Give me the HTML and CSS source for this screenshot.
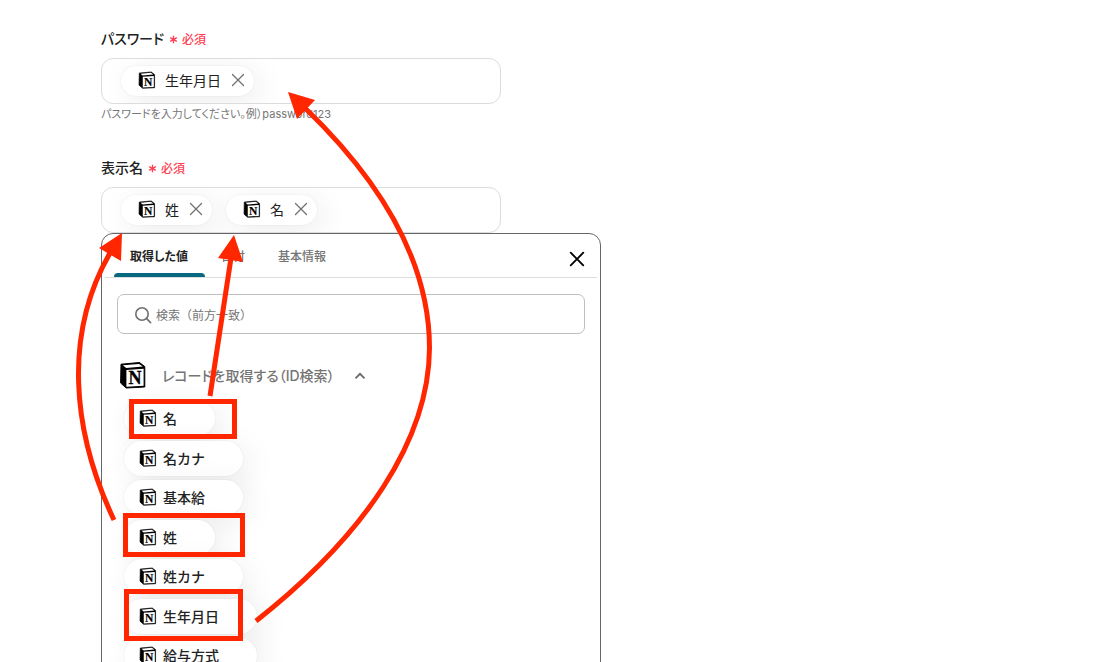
FILE: index.html
```html
<!DOCTYPE html>
<html lang="ja">
<head>
<meta charset="utf-8">
<meta name="viewport" content="width=device-width, initial-scale=1">
<title>フォーム設定</title>
<link rel="stylesheet" href="styles.css">
</head>
<body>
<svg class="defs" aria-hidden="true">
  <symbol id="notion" viewBox="0 0 28 28">
    <path d="M2 3.2 L20.5 1.5 L25.8 5.6 V26 L7.200 27 L1.6 22 Z" fill="#000" stroke="#000" stroke-width="1" stroke-linejoin="round"/>
    <path d="M3.800 4.2 L20 2.9 L23.8 5.6 L7.2 7 Z" fill="#fff"/>
    <path d="M7.4 9 L24.6 7.8 V24.800 L7.4 25.8 Z" fill="#fff"/>
    <text x="16" y="22.800" text-anchor="middle" class="logo-letter">N</text>
  </symbol>
  <symbol id="close" viewBox="0 0 14 14">
    <path d="M1.5 1.5 L12.5 12.5 M12.5 1.5 L1.5 12.5" fill="none" stroke="currentColor" stroke-linecap="round"/>
  </symbol>
</svg>
<main class="page">
  <form class="form">
    <div class="field">
      <label class="label" for="password">パスワード <span class="required"><svg class="star" viewBox="0 0 10 10" aria-hidden="true"><path d="M5 .8 V9.2 M1.3 2.9 L8.7 7.1 M8.7 2.9 L1.3 7.1"/></svg>必須</span></label>
      <div class="box">
        <span class="chip"><svg class="mark"><use href="#notion"/></svg>生年月日<button type="button" class="remove" aria-label="生年月日を削除"><svg><use href="#close"/></svg></button></span>
        <input class="entry" id="password" type="text">
      </div>
      <p class="help">パスワードを入力してください。例）password123</p>
    </div>
    <div class="field">
      <label class="label" for="display-name">表示名 <span class="required"><svg class="star" viewBox="0 0 10 10" aria-hidden="true"><path d="M5 .8 V9.2 M1.3 2.9 L8.7 7.1 M8.7 2.9 L1.3 7.1"/></svg>必須</span></label>
      <div class="box">
        <span class="chip"><svg class="mark"><use href="#notion"/></svg>姓<button type="button" class="remove" aria-label="姓を削除"><svg><use href="#close"/></svg></button></span>
        <span class="chip"><svg class="mark"><use href="#notion"/></svg>名<button type="button" class="remove" aria-label="名を削除"><svg><use href="#close"/></svg></button></span>
        <input class="entry" id="display-name" type="text">
      </div>
    </div>
  </form>
  <section class="panel">
    <header class="tabs">
      <button type="button" class="tab active">取得した値</button>
      <button type="button" class="tab">日付</button>
      <button type="button" class="tab">基本情報</button>
      <button type="button" class="dismiss" aria-label="閉じる"><svg><use href="#close"/></svg></button>
    </header>
    <div class="content">
      <div class="search">
        <svg class="lens" viewBox="0 0 18 18" aria-hidden="true"><circle cx="8" cy="8" r="6.2"/><path d="M12.6 12.6 L16.6 16.6"/></svg>
        <input class="query" type="search" aria-label="検索" placeholder="検索（前方一致）">
      </div>
      <button type="button" class="source" aria-expanded="true"><svg class="mark-large"><use href="#notion"/></svg><span>レコードを取得する（ID検索）</span><svg class="chevron" viewBox="0 0 12 8" aria-hidden="true"><path d="M1.5 6.3 L6 1.8 L10.5 6.3"/></svg></button>
      <div class="values">
        <button type="button" class="value"><svg class="mark"><use href="#notion"/></svg>名</button>
        <button type="button" class="value"><svg class="mark"><use href="#notion"/></svg>名カナ</button>
        <button type="button" class="value"><svg class="mark"><use href="#notion"/></svg>基本給</button>
        <button type="button" class="value"><svg class="mark"><use href="#notion"/></svg>姓</button>
        <button type="button" class="value"><svg class="mark"><use href="#notion"/></svg>姓カナ</button>
        <button type="button" class="value"><svg class="mark"><use href="#notion"/></svg>生年月日</button>
        <button type="button" class="value"><svg class="mark"><use href="#notion"/></svg>給与方式</button>
      </div>
    </div>
  </section>
  <svg class="notes" width="620" height="662" viewBox="0 0 620 662" aria-hidden="true">
    <g class="line">
      <path d="M114 520 C 71 429 64 333 110 253"/>
      <path d="M210 396 L231 258"/>
      <path d="M256 621 C 365 535 429 440 429.500 348 C 429.500 270 390 190 305 108"/>
      <path d="M131.500 401.500 H234.500 V436.500 H131.500 Z"/>
      <path d="M125.500 515.500 H242.500 V554.500 H125.500 Z"/>
      <path d="M126.500 591.500 H240.500 V638.500 H126.500 Z"/>
    </g>
    <path class="head" d="M122 233 L99 248 L121 261 Z M234 235 L218 258 L243 262 Z M288 92 L315 100 L297 119 Z"/>
  </svg>
</main>
</body>
</html>
```
FILE: styles.css
```css
* { box-sizing: border-box; }
body {
  margin: 0;
  background: #fff;
  color: #222;
  font-family: Inter, "Noto Sans CJK JP", sans-serif;
  font-size: 14px;
  font-feature-settings: "palt";
}
button, input { font: inherit; font-feature-settings: inherit; color: inherit; }
button { border: 0; padding: 0; background: none; }
.defs { display: none; }
.logo-letter { font: bold 18px "Liberation Serif", serif; fill: #000; stroke: #000; stroke-width: 0.3px; }
.page { position: relative; height: 100vh; overflow: hidden; padding: 28px 16px 0 101px; }
.form { max-width: 400px; }
.field { display: flex; flex-direction: column; }
.field + .field { margin-top: 33px; }
.label { display: flex; align-items: center; gap: 5px; height: 20px; margin-bottom: 10px; font-weight: 500; }
.required { display: flex; align-items: center; gap: 4px; font-size: 12px; color: #ff4052; }
.star { width: 9px; height: 9px; margin-top: 2px; fill: none; stroke: currentColor; stroke-width: 1.5px; }
.box {
  display: flex;
  align-items: center;
  gap: 14px;
  height: 46px;
  padding: 0 16px 0 19px;
  border: 1px solid #dcdcdf;
  border-radius: 12px;
  overflow: hidden;
}
.chip, .value {
  display: flex;
  align-items: center;
  border-radius: 18px;
  background: #fff;
  box-shadow: 0 0 2px rgba(0, 0, 0, .08), 6px 6px 30px rgba(0, 0, 0, .08);
}
.chip { flex: none; gap: 9px; height: 30px; padding: 0 8px 2px 17px; }
.mark { flex: none; width: 18px; height: 18px; }
.remove { display: flex; width: 16px; height: 16px; align-items: center; justify-content: center; color: #707070; }
.remove svg { width: 14px; height: 14px; stroke-width: 1.3px; }
.entry { flex: 1; min-width: 0; border: 0; outline: 0; background: none; }
.help { margin: 0; height: 20px; line-height: 20px; font-size: 11px; color: #757575; }
.panel {
  position: relative;
  max-width: 500px;
  height: 600px;
  border: 1px solid #666;
  border-radius: 12px;
  background: #fff;
}
.tabs { display: flex; margin: 0 3px; padding: 0 12px 0 9px; height: 44px; border-bottom: 1px solid #dedede; }
.tab { padding: 4px 17px 0 16px; border-bottom: 4px solid transparent; font-size: 12px; font-weight: 500; color: #757575; }
.tab.active { color: #222; font-weight: 700; position: relative; }
.tab.active::after { content: ""; position: absolute; left: 0; right: 0; bottom: -4px; height: 4px; border-radius: 4px 4px 0 0; background: #08687f; }
.dismiss { margin-left: auto; padding-top: 6px; color: #000; }
.dismiss svg { display: block; width: 16px; height: 16px; stroke-width: 1.6px; }
.content { padding: 16px 15px; }
.search { display: flex; align-items: center; gap: 4px; height: 40px; padding: 2px 16px 0; border: 1px solid #bfbfbf; border-radius: 7px; }
.lens { width: 18px; height: 18px; fill: none; stroke: #707070; stroke-width: 1.6px; stroke-linecap: round; }
.query { flex: 1; min-width: 0; padding: 0; border: 0; outline: 0; background: none; font-size: 12px; font-feature-settings: normal; }
.query::placeholder { color: #757575; opacity: 1; }
.source { display: flex; align-items: center; height: 30px; margin: 27px 0 10px 2px; padding-bottom: 2px; font-weight: 500; color: #757575; }
.mark-large { width: 28px; height: 28px; margin-right: 15px; }
.chevron { width: 12px; height: 8px; margin-left: 19px; margin-top: 2px; fill: none; stroke: #666; stroke-width: 1.7px; }
.values { display: grid; align-content: space-between; justify-items: start; min-height: 272px; padding-left: 7px; }
.value { height: 35px; gap: 6px; padding: 0 38px 1px 15px; font-weight: 500; font-feature-settings: normal; }
.notes { position: absolute; left: 0; top: 0; pointer-events: none; }
.line { fill: none; stroke: #ff2600; stroke-width: 5px; }
.head { fill: #ff2600; }
```
